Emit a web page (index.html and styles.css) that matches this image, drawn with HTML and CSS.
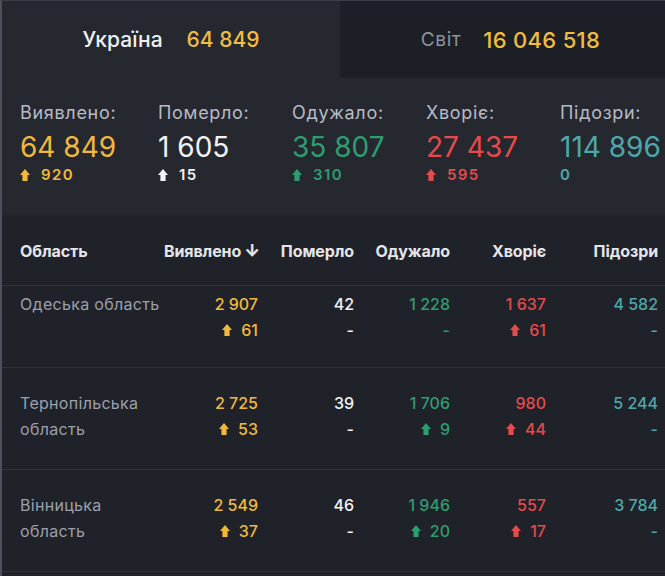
FILE: index.html
```html
<!DOCTYPE html>
<html lang="uk">
<head>
<meta charset="utf-8">
<link rel="stylesheet" href="styles.css">
</head>
<body>
<svg width="0" height="0" class="defs">
  <defs>
    <symbol id="up" viewBox="0 0 10 12"><path d="M5 0 L10 6 L7.6 6 L7.6 12 L2.4 12 L2.4 6 L0 6 Z"/></symbol>
  </defs>
</svg>
<div class="page">
  <div class="top">
    <div class="tabs">
      <div class="tab tab-active"><span class="tab-name">Україна</span><span class="tab-num">64 849</span></div>
      <div class="tab tab-other"><span class="tab-name dim">Світ</span><span class="tab-num">16 046 518</span></div>
    </div>
    <div class="stats">
      <div class="stat">
        <div class="stat-label">Виявлено:</div>
        <div class="stat-num yellow">64 849</div>
        <div class="stat-delta yellow"><svg class="arr"><use href="#up"/></svg>920</div>
      </div>
      <div class="stat">
        <div class="stat-label">Померло:</div>
        <div class="stat-num white">1 605</div>
        <div class="stat-delta white"><svg class="arr"><use href="#up"/></svg>15</div>
      </div>
      <div class="stat">
        <div class="stat-label">Одужало:</div>
        <div class="stat-num green">35 807</div>
        <div class="stat-delta green"><svg class="arr"><use href="#up"/></svg>310</div>
      </div>
      <div class="stat">
        <div class="stat-label">Хворіє:</div>
        <div class="stat-num red">27 437</div>
        <div class="stat-delta red"><svg class="arr"><use href="#up"/></svg>595</div>
      </div>
      <div class="stat">
        <div class="stat-label">Підозри:</div>
        <div class="stat-num teal">114 896</div>
        <div class="stat-delta teal">0</div>
      </div>
    </div>
  </div>

  <div class="table">
    <div class="row head">
      <div class="c-name">Область</div>
      <div class="c-num">Виявлено<span class="sort">↓</span></div>
      <div class="c-num">Померло</div>
      <div class="c-num">Одужало</div>
      <div class="c-num">Хворіє</div>
      <div class="c-num">Підозри</div>
    </div>

    <div class="row body first">
      <div class="c-name region">Одеська область</div>
      <div class="c-num yellow"><div>2 907</div><div class="d"><svg class="arr"><use href="#up"/></svg>61</div></div>
      <div class="c-num white"><div>42</div><div class="d">-</div></div>
      <div class="c-num green"><div>1 228</div><div class="d">-</div></div>
      <div class="c-num red"><div>1 637</div><div class="d"><svg class="arr"><use href="#up"/></svg>61</div></div>
      <div class="c-num teal"><div>4 582</div><div class="d">-</div></div>
    </div>

    <div class="row body">
      <div class="c-name region">Тернопільська область</div>
      <div class="c-num yellow"><div>2 725</div><div class="d"><svg class="arr"><use href="#up"/></svg>53</div></div>
      <div class="c-num white"><div>39</div><div class="d">-</div></div>
      <div class="c-num green"><div>1 706</div><div class="d"><svg class="arr"><use href="#up"/></svg>9</div></div>
      <div class="c-num red"><div>980</div><div class="d"><svg class="arr"><use href="#up"/></svg>44</div></div>
      <div class="c-num teal"><div>5 244</div><div class="d">-</div></div>
    </div>

    <div class="row body">
      <div class="c-name region">Вінницька область</div>
      <div class="c-num yellow"><div>2 549</div><div class="d"><svg class="arr"><use href="#up"/></svg>37</div></div>
      <div class="c-num white"><div>46</div><div class="d">-</div></div>
      <div class="c-num green"><div>1 946</div><div class="d"><svg class="arr"><use href="#up"/></svg>20</div></div>
      <div class="c-num red"><div>557</div><div class="d"><svg class="arr"><use href="#up"/></svg>17</div></div>
      <div class="c-num teal"><div>3 784</div><div class="d">-</div></div>
    </div>
  </div>
</div>
</body>
</html>
```

FILE: styles.css
```css
* { box-sizing: border-box; }
html, body { margin: 0; padding: 0; }
body {
  background: #202229;
  font-family: Inter, Roboto, "Noto Sans", sans-serif;
  overflow: hidden;
  width: 665px;
  height: 576px;
}
.defs { position: absolute; }
.page {
  border-left: 2px solid #4c505c;
  border-top: 1px solid #3a3d47;
  height: 576px;
}
.top { background: #262830; }
.tabs { display: flex; height: 77px; }
.tab {
  display: flex;
  align-items: center;
  justify-content: center;
  gap: 24px;
  font-size: 21px;
  font-weight: 500;
}
.tab-active { width: 338px; }
.tab-other { flex: 1; background: #1d1f26; padding-left: 16px; gap: 22px; }
.tab-other .tab-num { font-size: 22px; letter-spacing: 0.3px; }
.tab-name { color: #eef0f4; }
.tab-name.dim { color: #8f939d; font-weight: 400; font-size: 19px; letter-spacing: 0.6px; }
.tab-num { color: #f2bd3e; }

.stats {
  display: flex;
  padding: 24px 0 0 18px;
  height: 137px;
}
.stat { width: 134px; flex: none; }
.stat:first-child { width: 138px; }
.stat-label { font-size: 18px; letter-spacing: 0.7px; color: #b7bbc5; line-height: 22px; }
.stat-num { font-size: 28px; line-height: 36px; margin-top: 5px; white-space: nowrap; }
.stat-delta { font-size: 15px; letter-spacing: 1.4px; font-weight: 600; line-height: 20px; display: flex; align-items: center; gap: 11px; }

.arr { width: 10px; height: 12px; fill: currentColor; flex: none; }

.yellow { color: #f1b93c; }
.white { color: #f2f3f6; }
.green { color: #2c9e70; }
.red { color: #e34b4d; }
.teal { color: #4da7ab; }

.row {
  display: grid;
  grid-template-columns: 144px 94px 96px 96px 96px 112px;
  padding-left: 18px;
}
.head {
  height: 71px;
  align-items: center;
  font-size: 16px;
  font-weight: 700;
  color: #e4e6ea;
  border-bottom: 1px solid #30333c;
  padding-top: 2px;
  letter-spacing: -0.1px;
}
.c-num { text-align: right; }
.sort { margin-left: 3px; font-weight: 800; font-size: 17px; }
.body {
  border-bottom: 1px solid #30333c;
  padding-top: 22px;
  padding-bottom: 27px;
  font-size: 16px;
  font-weight: 500;
  line-height: 26px;
}
.body.first { padding-top: 5px; padding-bottom: 24px; }
.region { color: #9ba0ac; font-weight: 400; letter-spacing: 0.3px; }
.d { display: flex; justify-content: flex-end; align-items: center; gap: 9px; height: 26px; }
.d .arr { width: 10px; height: 12px; }
```
